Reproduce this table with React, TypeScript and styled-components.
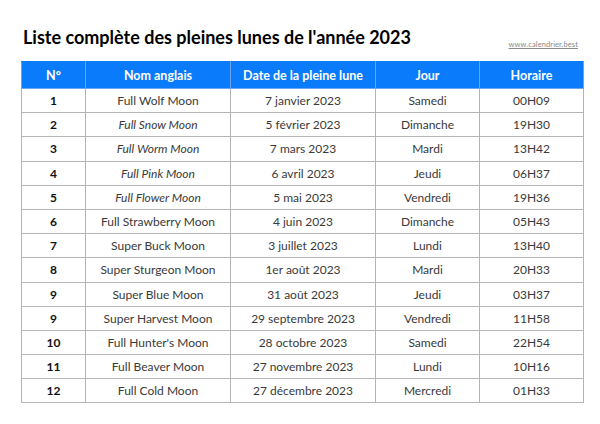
import styled, { createGlobalStyle } from "styled-components";

const GlobalStyle = createGlobalStyle`
  html, body {
    margin: 0;
    padding: 0;
    background: #ffffff;
  }
  body {
    font-family: Lato, "Open Sans", "Liberation Sans", sans-serif;
  }
`;

const Page = styled.div`
  width: 600px;
  height: 424px;
  box-sizing: border-box;
  padding: 26px 22px 0 21px;
  background: #fff;
`;

const TitleRow = styled.div`
  display: flex;
  justify-content: space-between;
  align-items: flex-end;
  height: 22px;
  margin-bottom: 13px;
`;

const Title = styled.h1`
  margin: 0 0 0 2px;
  font-size: 18px;
  font-weight: 700;
  color: #000;
  line-height: 22px;
`;

const Source = styled.span`
  font-size: 7.5px;
  color: #8a8a8a;
  text-decoration: underline;
  margin-bottom: -1px;
  letter-spacing: 0.1px;
`;

const Table = styled.table`
  width: 557px;
  border-collapse: collapse;
  table-layout: fixed;
`;

const HeadCell = styled.th<{ $w: number }>`
  width: ${(p) => p.$w}px;
  height: 26px;
  padding: 0;
  background: #0a7cfb;
  color: #fff;
  font-size: 12.5px;
  font-weight: 700;
  text-align: center;
  border: 1px solid #6aa6f0;
  border-top-color: #0a7cfb;
`;

const Cell = styled.td<{ $bold?: boolean; $italic?: boolean }>`
  height: 23.2px;
  padding: 0;
  text-align: center;
  font-size: 12px;
  color: ${(p) => (p.$bold ? "#111" : "#3a3a3a")};
  font-weight: ${(p) => (p.$bold ? 700 : 400)};
  font-style: ${(p) => (p.$italic ? "italic" : "normal")};
  border: 1px solid #b4b4b4;
`;

const columns = [
  { label: "N°", w: 63 },
  { label: "Nom anglais", w: 144 },
  { label: "Date de la pleine lune", w: 144 },
  { label: "Jour", w: 103 },
  { label: "Horaire", w: 103 },
];

const moons = [
  ["1", "Full Wolf Moon", "7 janvier 2023", "Samedi", "00H09", false],
  ["2", "Full Snow Moon", "5 février 2023", "Dimanche", "19H30", true],
  ["3", "Full Worm Moon", "7 mars 2023", "Mardi", "13H42", true],
  ["4", "Full Pink Moon", "6 avril 2023", "Jeudi", "06H37", true],
  ["5", "Full Flower Moon", "5 mai 2023", "Vendredi", "19H36", true],
  ["6", "Full Strawberry Moon", "4 juin 2023", "Dimanche", "05H43", false],
  ["7", "Super Buck Moon", "3 juillet 2023", "Lundi", "13H40", false],
  ["8", "Super Sturgeon Moon", "1er août 2023", "Mardi", "20H33", false],
  ["9", "Super Blue Moon", "31 août 2023", "Jeudi", "03H37", false],
  ["9", "Super Harvest Moon", "29 septembre 2023", "Vendredi", "11H58", false],
  ["10", "Full Hunter's Moon", "28 octobre 2023", "Samedi", "22H54", false],
  ["11", "Full Beaver Moon", "27 novembre 2023", "Lundi", "10H16", false],
  ["12", "Full Cold Moon", "27 décembre 2023", "Mercredi", "01H33", false],
] as const;

export default function App() {
  return (
    <>
      <GlobalStyle />
      <Page>
        <TitleRow>
          <Title>Liste complète des pleines lunes de l'année 2023</Title>
          <Source>www.calendrier.best</Source>
        </TitleRow>
        <Table>
          <thead>
            <tr>
              {columns.map((c) => (
                <HeadCell key={c.label} $w={c.w}>
                  {c.label}
                </HeadCell>
              ))}
            </tr>
          </thead>
          <tbody>
            {moons.map(([n, name, date, day, time, italic], i) => (
              <tr key={i}>
                <Cell $bold>{n}</Cell>
                <Cell $italic={italic}>{name}</Cell>
                <Cell>{date}</Cell>
                <Cell>{day}</Cell>
                <Cell>{time}</Cell>
              </tr>
            ))}
          </tbody>
        </Table>
      </Page>
    </>
  );
}
